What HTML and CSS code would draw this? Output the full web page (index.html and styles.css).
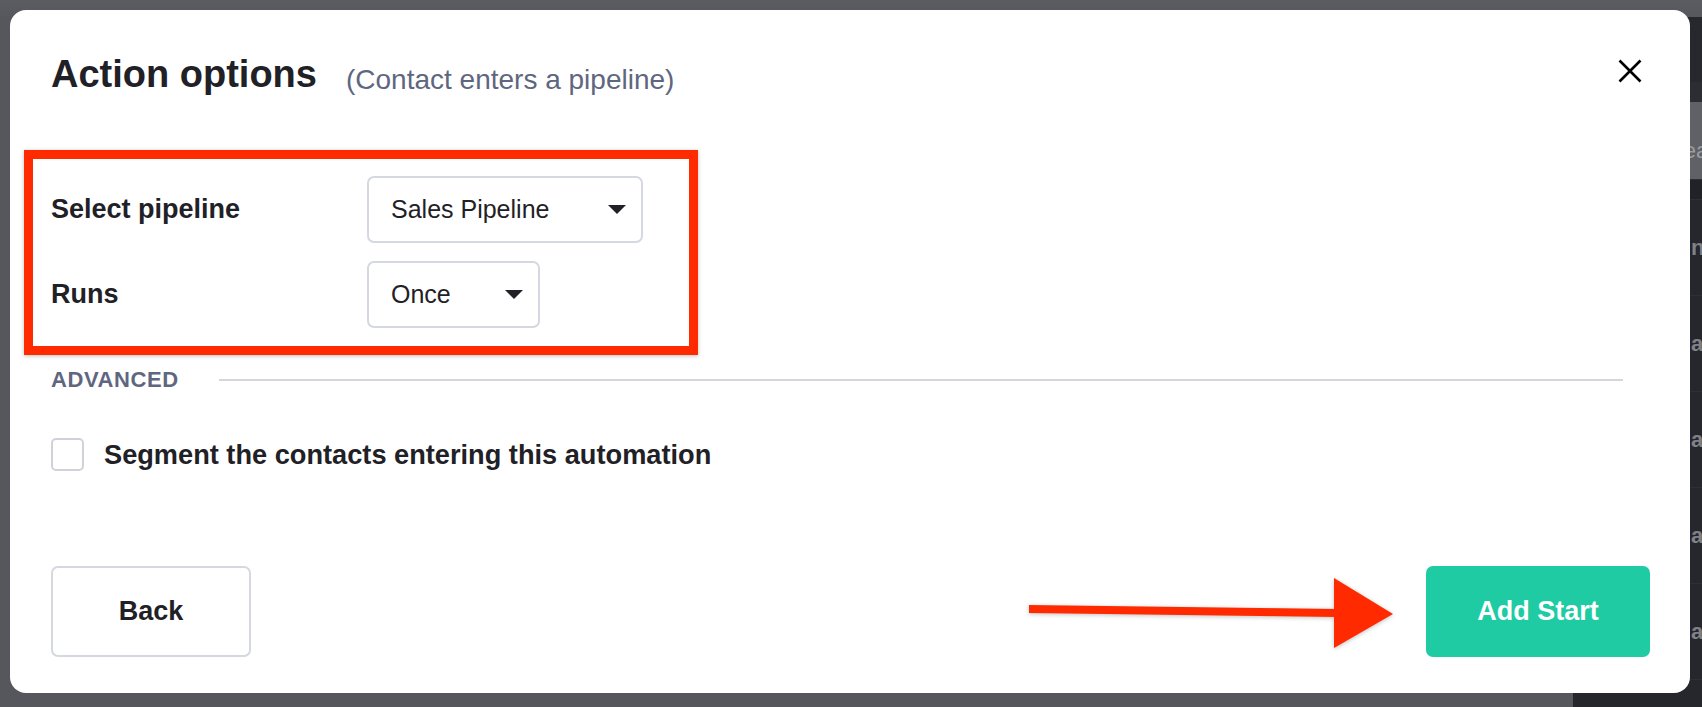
FILE: index.html
```html
<!DOCTYPE html>
<html lang="en">
<head>
<meta charset="utf-8">
<title>Action options</title>
<link rel="stylesheet" href="styles.css">
</head>
<body>
<div class="app">
  <div class="app-top"></div>
  <div class="app-main">
    <div class="app-left"></div>
    <div class="app-panel">
      <div class="panel-row panel-row--top"></div>
      <div class="panel-row panel-row--search"><span>Sea</span></div>
      <div class="panel-row panel-row--gap"></div>
      <div class="panel-row"><span>ng</span></div>
      <div class="panel-row"><span>a</span></div>
      <div class="panel-row"><span>a</span></div>
      <div class="panel-row"><span>a</span></div>
      <div class="panel-row"><span>a</span></div>
    </div>
  </div>
</div>

<div class="modal">
  <header class="modal-header">
    <h1 class="modal-title">Action options</h1>
    <span class="modal-subtitle">(Contact enters a pipeline)</span>
    <button class="modal-close" aria-label="Close">
      <svg width="24" height="24" viewBox="0 0 24 24"><path d="M1.5 1.5 L22.5 22.5 M22.5 1.5 L1.5 22.5" stroke="#000" stroke-width="2.6" fill="none"/></svg>
    </button>
  </header>

  <div class="highlight">
    <div class="field-row">
      <span class="field-label">Select pipeline</span>
      <div class="select select--wide"><span>Sales Pipeline</span><span class="caret"></span></div>
    </div>
    <div class="field-row">
      <span class="field-label">Runs</span>
      <div class="select select--narrow"><span>Once</span><span class="caret"></span></div>
    </div>
  </div>

  <div class="section-divider">
    <span class="section-title">ADVANCED</span>
    <div class="rule"></div>
  </div>

  <label class="checkbox-row">
    <span class="checkbox"></span>
    <span class="checkbox-text">Segment the contacts entering this automation</span>
  </label>

  <footer class="modal-footer">
    <button class="btn btn--secondary">Back</button>
    <button class="btn btn--primary">Add Start</button>
  </footer>

  <svg class="annotation-arrow" width="372" height="78" viewBox="0 0 372 78">
    <polygon points="4,31 312,35 312,43 4,39" fill="#ff2a00"/>
    <polygon points="309,4 368,40 309,74" fill="#ff2a00"/>
  </svg>
</div>
</body>
</html>
```

FILE: styles.css
```css
* { box-sizing: border-box; }

html, body {
  margin: 0;
  padding: 0;
}

body {
  width: 1702px;
  height: 707px;
  overflow: hidden;
  position: relative;
  font-family: "Liberation Sans", Arial, sans-serif;
  color: #1f2126;
  background: #57585d;
}

/* underlying app, dimmed */
.app {
  width: 1702px;
  height: 707px;
  display: flex;
  flex-direction: column;
}

.app-top {
  height: 17px;
  background: linear-gradient(#5b5c61, #57585d);
}

.app-main {
  flex: 1;
  display: flex;
}

.app-left {
  flex: 1;
  background: #56575c;
}

.app-panel {
  width: 129px;
  background: #25272d;
  display: flex;
  flex-direction: column;
}

.panel-row {
  height: 96px;
  flex: none;
  padding-left: 118px;
  display: flex;
  align-items: center;
  overflow: hidden;
  white-space: nowrap;
  border-bottom: 1px solid #2d2f35;
  font-size: 22px;
  font-weight: 700;
  color: #7f8187;
}

.panel-row--top { height: 65px; background: #26282e; border-bottom: 0; }
.panel-row--search {
  height: 78px;
  background: #606166;
  color: #9a9ca1;
  font-weight: 400;
  padding-left: 96px;
  border-top: 20px solid #2b2d33;
  padding-top: 20px;
  height: 98px;
}
.panel-row--gap { height: 20px; background: #202227; }

/* modal */
.modal {
  position: absolute;
  left: 10px;
  top: 10px;
  width: 1680px;
  height: 683px;
  background: #fff;
  border-radius: 16px;
  padding: 41px 48px 36px 41px;
  display: flex;
  flex-direction: column;
}

.modal-header {
  display: flex;
  align-items: baseline;
  height: 46px;
}

.modal-title {
  margin: 0;
  font-size: 38px;
  line-height: 46px;
  font-weight: 700;
  color: #1f2126;
}

.modal-subtitle {
  margin-left: 29px;
  font-size: 28px;
  color: #5f6680;
  position: relative;
  top: 2px;
}

.modal-close {
  margin-left: auto;
  align-self: flex-start;
  margin-top: 8px;
  width: 24px;
  height: 24px;
  padding: 0;
  border: 0;
  background: none;
  display: block;
}

.modal-close svg { display: block; }

.highlight {
  margin-top: 53px;
  margin-left: -27px;
  width: 674px;
  border: 9px solid #ff2a00;
  box-shadow: 0 1px 4px rgba(0, 0, 0, 0.25);
  padding: 17px 0 18px 18px;
  display: flex;
  flex-direction: column;
  gap: 18px;
}

.field-row {
  display: grid;
  grid-template-columns: 316px auto;
  align-items: center;
}

.field-label {
  font-size: 27px;
  font-weight: 700;
  color: #1f2126;
}

.select {
  height: 67px;
  border: 2px solid #d5d8e0;
  border-radius: 7px;
  padding: 0 15px 0 22px;
  display: flex;
  align-items: center;
  justify-content: space-between;
  font-size: 25px;
  color: #1f2126;
  background: #fff;
}

.select--wide { width: 276px; }
.select--narrow { width: 173px; }

.caret {
  width: 0;
  height: 0;
  border-left: 9.5px solid transparent;
  border-right: 9.5px solid transparent;
  border-top: 9px solid #1f2126;
}

.section-divider {
  margin-top: 12px;
  height: 26px;
  display: flex;
  align-items: center;
  margin-right: 19px;
}

.section-title {
  font-size: 22px;
  font-weight: 700;
  letter-spacing: 0.6px;
  color: #5f6680;
  line-height: 26px;
}

.rule {
  flex: 1;
  height: 2px;
  background: #d3d6dd;
  margin-left: 40px;
}

.checkbox-row {
  margin-top: 45px;
  display: flex;
  align-items: center;
  gap: 20px;
}

.checkbox {
  width: 33px;
  height: 33px;
  border: 2px solid #cfd2d9;
  border-radius: 5px;
  background: #fff;
}

.checkbox-text {
  font-size: 27.2px;
  font-weight: 700;
  color: #1f2126;
}

.modal-footer {
  margin-top: auto;
  margin-right: -8px;
  display: flex;
  justify-content: space-between;
  align-items: center;
}

.btn {
  height: 91px;
  border-radius: 7px;
  font-family: "Liberation Sans", Arial, sans-serif;
  font-size: 27px;
  font-weight: 700;
  padding: 0;
}

.btn--secondary {
  width: 200px;
  background: #fff;
  border: 2px solid #d5d8e0;
  color: #1f2126;
}

.btn--primary {
  width: 224px;
  background: #1ecba3;
  border: 0;
  color: #fff;
}

.annotation-arrow {
  position: absolute;
  left: 1015px;
  top: 564px;
  filter: drop-shadow(0 1px 2px rgba(0, 0, 0, 0.25));
}
```
